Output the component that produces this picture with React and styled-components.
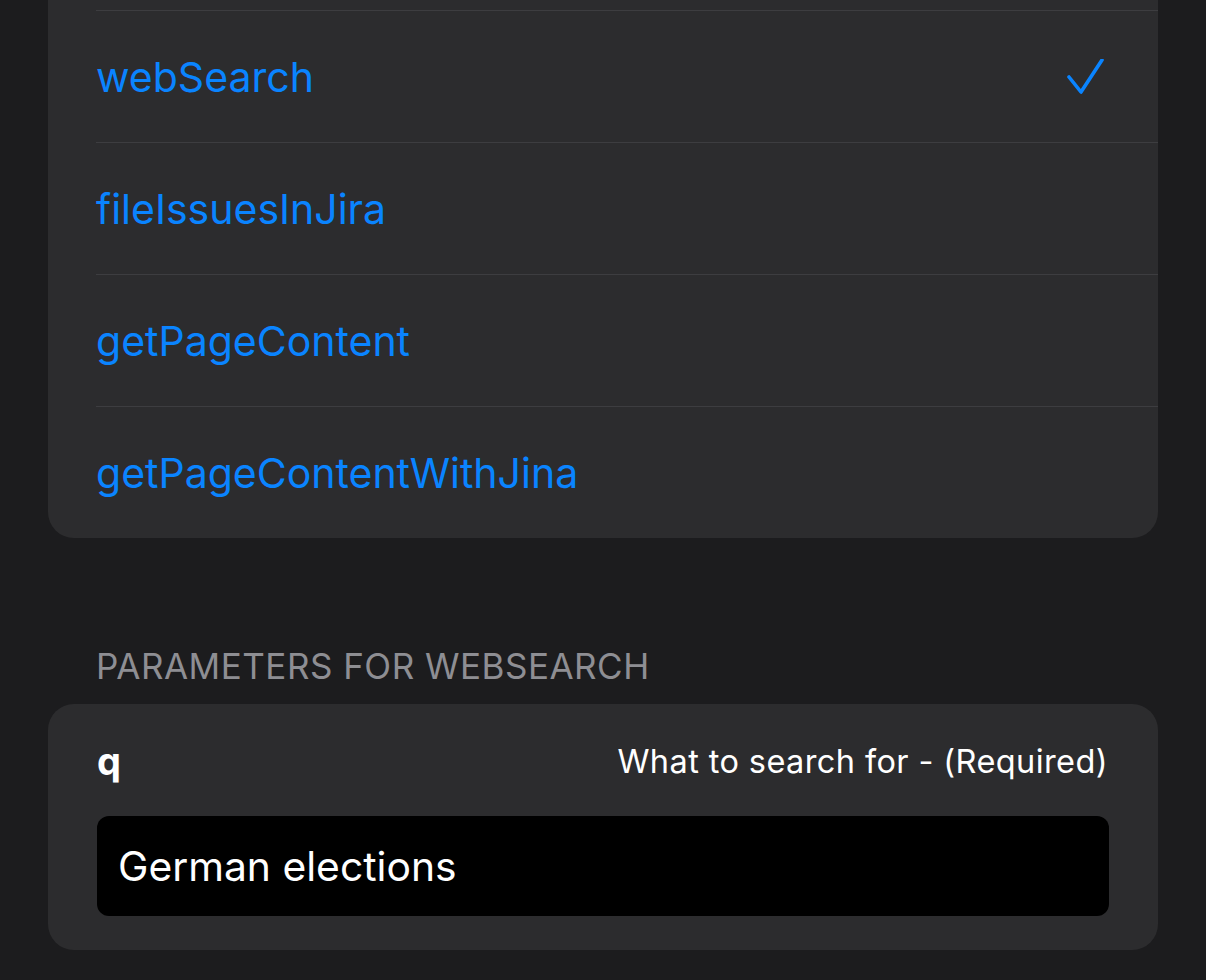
import React from "react";
import styled, { createGlobalStyle } from "styled-components";

const Global = createGlobalStyle`
  html, body { margin: 0; padding: 0; background: #1c1c1e; }
  body { font-family: Inter, "Noto Sans", sans-serif; overflow: hidden; height: 980px; }
`;

const Page = styled.div`
  width: 1206px;
  height: 980px;
  overflow: hidden;
  background: #1c1c1e;
  display: flex;
  flex-direction: column;
  padding: 0 48px;
  box-sizing: border-box;
`;

const Card = styled.div`
  background: #2c2c2e;
  border-radius: ${(p) => (p.$flatTop ? "0 0 26px 26px" : "26px")};
  overflow: hidden;
`;

const ToolList = styled(Card)`
  padding-top: 10px;
`;

const ListRow = styled.div`
  height: 132px;
  margin-left: 48px;
  padding-right: 52px;
  display: flex;
  align-items: center;
  justify-content: space-between;
  box-sizing: border-box;
  border-top: 1.5px solid #3d3d40;
`;

const ToolName = styled.span`
  color: #0a84ff;
  font-size: 41px;
  letter-spacing: 0;
`;

const SectionHeader = styled.div`
  margin: 108px 0 18px 48px;
  color: #8e8e93;
  font-size: 35px;
  letter-spacing: 0.5px;
  text-transform: uppercase;
  line-height: 40px;
`;

const ParamCard = styled(Card)`
  padding: 26px 49px 34px 49px;
  display: flex;
  flex-direction: column;
  gap: 24px;
`;

const ParamHead = styled.div`
  display: flex;
  align-items: center;
  justify-content: space-between;
  height: 62px;
  padding-right: 1px;
`;

const ParamName = styled.span`
  color: #fff;
  font-weight: 700;
  font-size: 38px;
`;

const ParamDesc = styled.span`
  color: #fff;
  font-size: 32.5px;
  letter-spacing: 0.4px;
`;

const Input = styled.div`
  background: #000;
  border-radius: 12px;
  height: 100px;
  display: flex;
  align-items: center;
  padding: 0 21px;
  color: #fff;
  font-size: 40.8px;
`;

const CheckIcon = styled.svg`
  margin-top: 4px;
`;

const Check = () => (
  <CheckIcon width="40" height="40" viewBox="0 0 40 40" fill="none">
    <path d="M3 18 L15 33 L36 1" stroke="#0a84ff" strokeWidth="3.6" strokeLinecap="round" strokeLinejoin="round" />
  </CheckIcon>
);

const tools = ["webSearch", "fileIssuesInJira", "getPageContent", "getPageContentWithJina"];

export default function App() {
  return (
    <>
      <Global />
      <Page>
        <ToolList $flatTop>
          {tools.map((t) => (
            <ListRow key={t}>
              <ToolName>{t}</ToolName>
              {t === "webSearch" && <Check />}
            </ListRow>
          ))}
        </ToolList>
        <SectionHeader>Parameters for webSearch</SectionHeader>
        <ParamCard>
          <ParamHead>
            <ParamName>q</ParamName>
            <ParamDesc>What to search for - (Required)</ParamDesc>
          </ParamHead>
          <Input>German elections</Input>
        </ParamCard>
      </Page>
    </>
  );
}
